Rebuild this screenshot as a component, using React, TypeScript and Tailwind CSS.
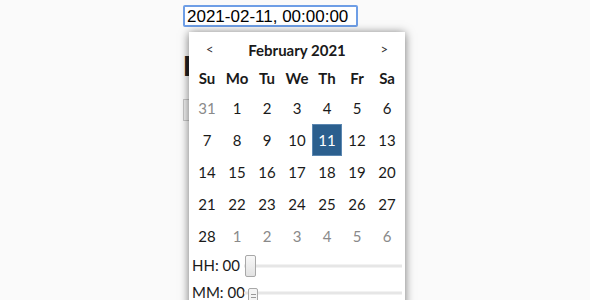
import React from 'react';

const weekdays = ['Su', 'Mo', 'Tu', 'We', 'Th', 'Fr', 'Sa'];

const weeks: { d: number; out?: boolean }[][] = [
  [{ d: 31, out: true }, { d: 1 }, { d: 2 }, { d: 3 }, { d: 4 }, { d: 5 }, { d: 6 }],
  [{ d: 7 }, { d: 8 }, { d: 9 }, { d: 10 }, { d: 11 }, { d: 12 }, { d: 13 }],
  [{ d: 14 }, { d: 15 }, { d: 16 }, { d: 17 }, { d: 18 }, { d: 19 }, { d: 20 }],
  [{ d: 21 }, { d: 22 }, { d: 23 }, { d: 24 }, { d: 25 }, { d: 26 }, { d: 27 }],
  [{ d: 28 }, { d: 1, out: true }, { d: 2, out: true }, { d: 3, out: true }, { d: 4, out: true }, { d: 5, out: true }, { d: 6, out: true }],
];

const TimeSlider = ({ label, thumb }: { label: string; thumb: 'big' | 'small' }) => (
  <div className="flex items-center h-[27px]">
    <span className="w-[50px] shrink-0 whitespace-nowrap">{label}: 00</span>
    <div className="relative flex-1 h-full flex items-center">
      <div className="absolute left-[2px] right-0 top-1/2 h-[3px] -translate-y-1/2 bg-[#e6e6e6]" />
      {thumb === 'big' ? (
        <div className="relative ml-[3px] w-[11px] h-[22px] border border-[#a8a8a8] rounded-[2px] bg-gradient-to-b from-[#f8f8f8] to-[#e2e2e2]" />
      ) : (
        <div className="relative ml-[6px] mt-[10px] w-[10px] h-[20px] border border-[#a8a8a8] rounded-[2px] bg-[#f4f4f4] flex flex-col items-center justify-center gap-[2px]">
          <div className="w-[5px] h-px bg-[#999]" />
          <div className="w-[5px] h-px bg-[#999]" />
          <div className="w-[5px] h-px bg-[#999]" />
        </div>
      )}
    </div>
  </div>
);

export default function App() {
  return (
    <div className="relative min-h-screen h-[300px] overflow-hidden bg-[#fafafa] font-['Liberation_Sans',sans-serif] text-black">
      <div className="pl-[183px] pt-[5px]">
        <div className="w-[175px] h-[22px] border-2 border-[#6e9ee6] rounded-[2px] bg-white flex items-center pl-[2px] text-[17px] leading-none">
          2021-02-11, 00:00:00
        </div>
        <h1 className="mt-[24px] text-[30px] font-bold leading-[30px] text-[#222]">Date picker</h1>
        <div className="mt-[18px] w-[80px] h-[22px] border border-[#c8c8c8] bg-[#f0f0f0]" />
      </div>

      {/* Popup */}
      <div className="absolute left-[189px] top-[32px] w-[216px] h-[290px] bg-white shadow-[0_1px_9px_rgba(0,0,0,0.55)] px-[3px] pt-[4px] font-['Lato','Noto_Sans',sans-serif] text-[15px] text-[#1a1a1a]">
        <div className="flex items-center justify-between h-[28px] px-[14px]">
          <span className="text-[13px] text-[#333]">&lt;</span>
          <span className="font-bold">February 2021</span>
          <span className="text-[13px] text-[#333]">&gt;</span>
        </div>
        <div className="grid grid-cols-7 h-[28px] items-center font-bold">
          {weekdays.map((w) => (
            <span key={w} className="text-center">{w}</span>
          ))}
        </div>
        {weeks.map((week, i) => (
          <div key={i} className="grid grid-cols-7 h-[32px]">
            {week.map((c, j) => {
              const sel = !c.out && c.d === 11;
              return (
                <div
                  key={j}
                  className={
                    sel
                      ? 'flex items-center justify-center bg-[#2b5f8e] border border-[#5b87b1] text-white'
                      : c.out
                      ? 'flex items-center justify-center text-[#8a8a8a]'
                      : 'flex items-center justify-center'
                  }
                >
                  {c.d}
                </div>
              );
            })}
          </div>
        ))}
        <TimeSlider label="HH" thumb="big" />
        <TimeSlider label="MM" thumb="small" />
      </div>
    </div>
  );
}
